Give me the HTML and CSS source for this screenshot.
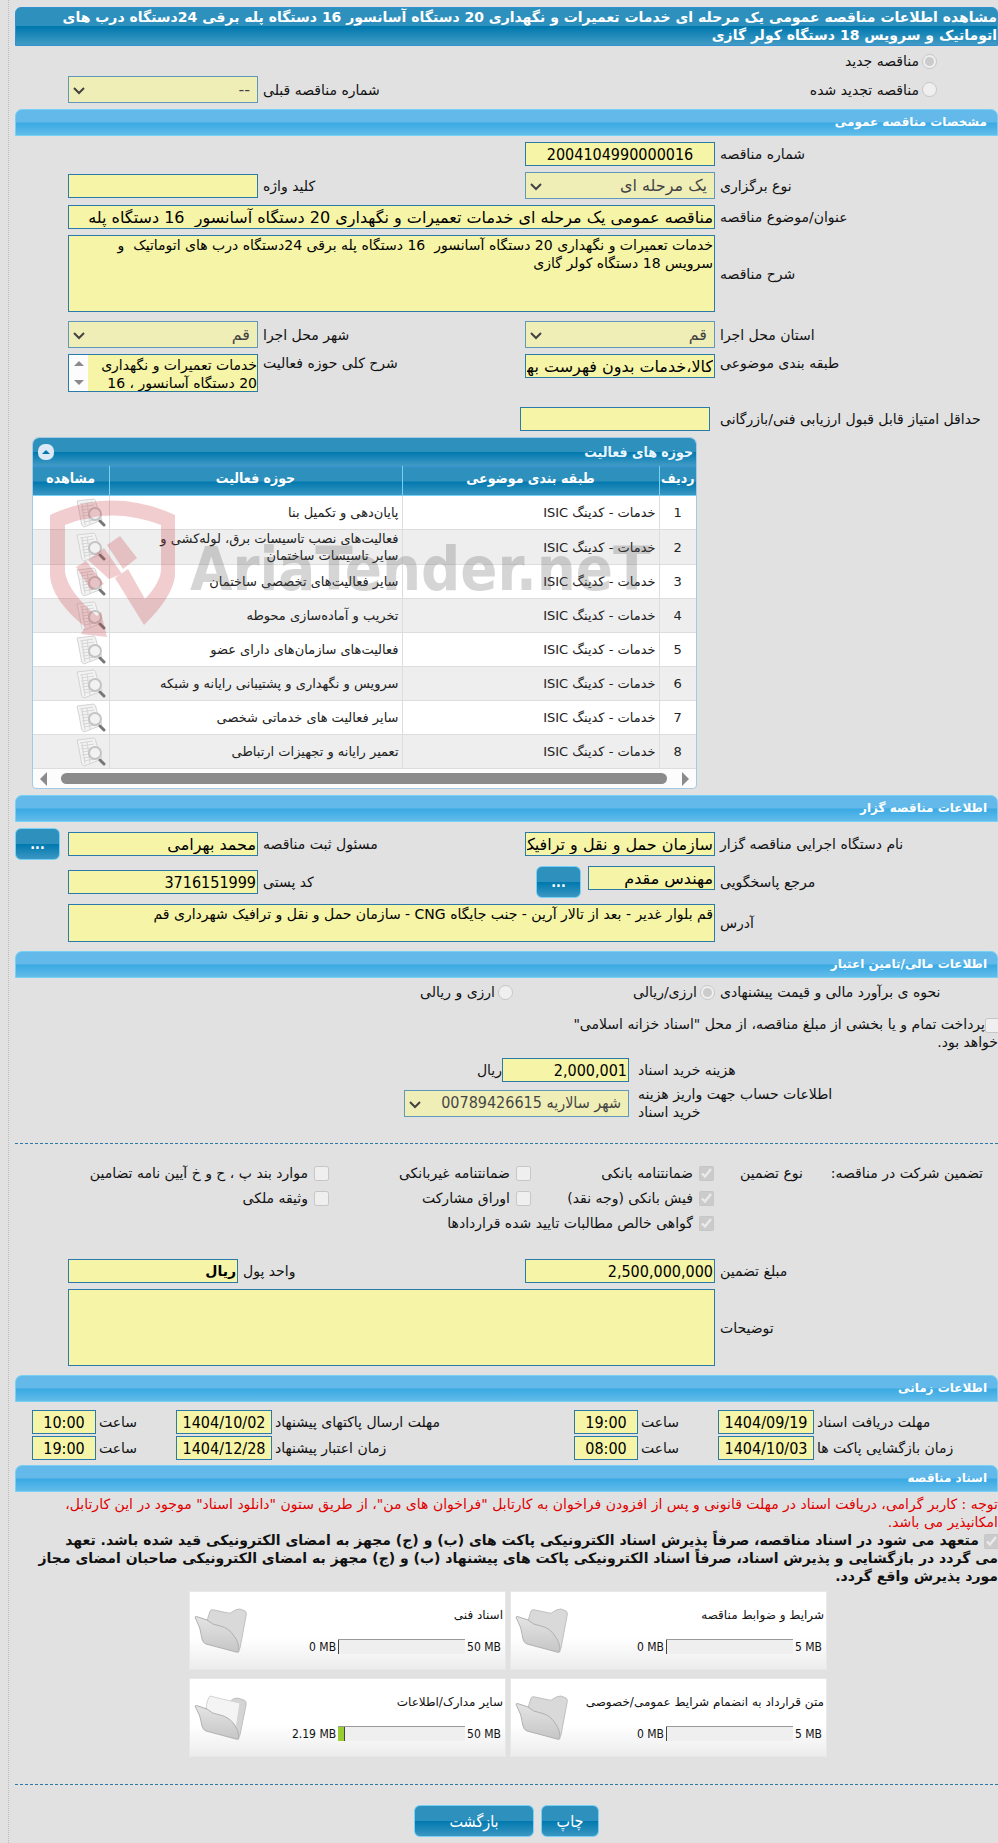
FILE: index.html
```html
<!DOCTYPE html>
<html lang="fa" dir="rtl">
<head>
    <meta charset="UTF-8">
    <title>مشاهده اطلاعات مناقصه عمومی</title>
    <link rel="stylesheet" href="styles.css">
</head>
<body>
    <!-- icons -->
    <svg class="defs" width="0" height="0">
        <defs>
            <linearGradient id="folder-fill" x1="0" y1="0" x2="0" y2="1">
                <stop offset="0" stop-color="#e4e4e4"/>
                <stop offset="1" stop-color="#c6c6c6"/>
            </linearGradient>
        </defs>
        <symbol id="folder" viewBox="0 0 54 46">
            <path d="M13 13 L16 3 Q17 1 20 2 L34 5 Q36 6 38 4 Q42 1 46 1 L51 3 Q53 4 52 8 L46 40 Q45 43 43 42 L12 35 Z" fill="#d9d9d9" stroke="#c0c0c0"/>
            <path d="M1 9 Q2 8 4 9 L13 12 Q18 17 26 18 Q35 20 40 28 Q45 34 45 43 Q45 45 42 44 L12 36 Q9 35 8 31 Q7 20 1 9 Z" fill="url(#folder-fill)" stroke="#b0b0b0"/>
        </symbol>
        <symbol id="folder-full" viewBox="0 0 54 46">
            <path d="M12 14 L15 5 L46 9 L43 38 L12 34 Z" fill="#e0e0e0" stroke="#ccc"/>
            <path d="M35 8 Q38 3 43 3 L50 5 Q53 6 52 10 L46 40 Q45 43 43 42 L34 38 Z" fill="#d4d4d4" stroke="#c0c0c0"/>
            <path d="M12 14 Q13 4 16 1 L28 4 L46 8 L42 34 Z" fill="#f4f4f4" stroke="#d4d4d4"/>
            <path d="M1 11 Q2 10 4 11 L13 14 Q18 19 26 20 Q35 22 40 29 Q45 35 45 43 Q45 45 42 44 L12 36 Q9 35 8 31 Q7 21 1 11 Z" fill="url(#folder-fill)" stroke="#b0b0b0"/>
        </symbol>
        <symbol id="view" viewBox="0 0 30 30">
            <path d="M1 3 L18 1 Q20 2 20 5 L22 12 L26 22 L8 29 Q5 28 5 23 L3 12 Z" fill="#f3f3f3" stroke="#d4d4d4"/>
            <path d="M4 6 L17 4 M5 9 L18 7 M5 12 L14 11 M6 15 L13 14 M6 18 L13 17 M7 21 L15 20 M8 24 L18 22 M6 6 L9 27 M11 5 L14 26" stroke="#d6d6d6" fill="none"/>
            <circle cx="19" cy="16" r="6" fill="#f2f2f2" stroke="#c4c4c4" stroke-width="2"/>
            <path d="M24 23 L28 27" stroke="#777" stroke-width="3" stroke-linecap="round"/>
        </symbol>
    </svg>

    <main class="page">
        <h1 class="title">مشاهده اطلاعات مناقصه عمومی یک مرحله ای خدمات تعمیرات و نگهداری 20 دستگاه آسانسور 16 دستگاه پله برقی 24دستگاه درب های<br>اتوماتیک و سرویس 18 دستگاه کولر گازی</h1>

        <div class="kind">
            <label class="check"><input type="radio" name="kind" checked disabled>مناقصه جدید</label>
            <div class="row kind-row">
                <label class="check"><input type="radio" name="kind" disabled>مناقصه تجدید شده</label>
                <label class="name" for="prev">شماره مناقصه قبلی</label>
                <select class="field select" id="prev" disabled><option>--</option></select>
            </div>
        </div>

        <h2 class="section">مشخصات مناقصه عمومی</h2>
        <div class="rows specs">
            <div class="row">
                <label class="name" for="number">شماره مناقصه</label>
                <input class="field num center" id="number" value="2004104990000016" readonly>
            </div>
            <div class="row">
                <label class="name" for="type">نوع برگزاری</label>
                <select class="field select" id="type" disabled><option>یک مرحله ای</option></select>
                <label class="name" for="keyword">کلید واژه</label>
                <input class="field" id="keyword" readonly>
            </div>
            <div class="row">
                <label class="name" for="subject">عنوان/موضوع مناقصه</label>
                <input class="field wide" id="subject" value="مناقصه عمومی یک مرحله ای خدمات تعمیرات و نگهداری 20 دستگاه آسانسور  16 دستگاه پله" readonly>
            </div>
            <div class="row">
                <label class="name" for="desc">شرح مناقصه</label>
                <textarea class="field area wide" id="desc" readonly>خدمات تعمیرات و نگهداری 20 دستگاه آسانسور  16 دستگاه پله برقی 24دستگاه درب های اتوماتیک  و
سرویس 18 دستگاه کولر گازی</textarea>
            </div>
            <div class="row place">
                <label class="name" for="province">استان محل اجرا</label>
                <select class="field select" id="province" disabled><option>قم</option></select>
                <label class="name" for="city">شهر محل اجرا</label>
                <select class="field select" id="city" disabled><option>قم</option></select>
            </div>
            <div class="row top">
                <label class="name" for="category">طبقه بندی موضوعی</label>
                <input class="field" id="category" value="کالا،خدمات بدون فهرست بها" readonly>
                <label class="name" for="scope">شرح کلی حوزه فعالیت</label>
                <div class="scroll-area field">
                    <textarea class="scroll-text" id="scope" readonly>خدمات تعمیرات و نگهداری
20 دستگاه آسانسور ، 16</textarea>
                    <span class="v-scroll"><i class="up"></i><i class="down"></i></span>
                </div>
            </div>
            <div class="row score">
                <label class="name" for="score">حداقل امتیاز قابل قبول ارزیابی فنی/بازرگانی</label>
                <input class="field" id="score" readonly>
            </div>
        </div>

        <div class="grid-panel">
            <div class="grid-title">
                <span>حوزه های فعالیت</span>
                <button class="collapse" type="button" aria-label="بستن"><i></i></button>
            </div>
            <table class="grid">
                <thead>
                    <tr><th class="c-num">ردیف</th><th class="c-cat">طبقه بندی موضوعی</th><th>حوزه فعالیت</th><th class="c-view">مشاهده</th></tr>
                </thead>
                <tbody>
                    <tr><td>1</td><td>خدمات - کدینگ ISIC</td><td>پایان‌دهی و تکمیل بنا</td><td><svg><use href="#view"/></svg></td></tr>
                    <tr><td>2</td><td>خدمات - کدینگ ISIC</td><td>فعالیت‌های نصب تاسیسات برق، لوله‌کشی و<br>سایر تاسیسات ساختمان</td><td><svg><use href="#view"/></svg></td></tr>
                    <tr><td>3</td><td>خدمات - کدینگ ISIC</td><td>سایر فعالیت‌های تخصصی ساختمان</td><td><svg><use href="#view"/></svg></td></tr>
                    <tr><td>4</td><td>خدمات - کدینگ ISIC</td><td>تخریب و آماده‌سازی محوطه</td><td><svg><use href="#view"/></svg></td></tr>
                    <tr><td>5</td><td>خدمات - کدینگ ISIC</td><td>فعالیت‌های سازمان‌های دارای عضو</td><td><svg><use href="#view"/></svg></td></tr>
                    <tr><td>6</td><td>خدمات - کدینگ ISIC</td><td>سرویس و نگهداری و پشتیبانی رایانه و شبکه</td><td><svg><use href="#view"/></svg></td></tr>
                    <tr><td>7</td><td>خدمات - کدینگ ISIC</td><td>سایر فعالیت های خدماتی شخصی</td><td><svg><use href="#view"/></svg></td></tr>
                    <tr><td>8</td><td>خدمات - کدینگ ISIC</td><td>تعمیر رایانه و تجهیزات ارتباطی</td><td><svg><use href="#view"/></svg></td></tr>
                </tbody>
            </table>
            <div class="h-scroll"><i class="next"></i><b></b><i class="prev"></i></div>
            <div class="watermark">
                <svg width="126" height="138" viewBox="0 0 126 138">
                    <g fill="#c8343c">
                        <path d="M0 15 Q62 -14 125 15 L125 76 Q122 98 94 125 L65 78 L78 69 L95 99 Q111 82 111 69 L111 25 Q62 6 15 25 L15 72 Q18 92 47 116 L51 112 L57 137 L31 134 L35 127 Q2 100 0 76 Z"/>
                        <path d="M57 45 L70 36 L87 58 L73 69 Z"/>
                        <path d="M38 60 L54 48 L72 74 L59 79 Z"/>
                        <path d="M26 67 L36 61 L54 84 L41 90 Z"/>
                    </g>
                </svg>
                <span>AriaTender.neT</span>
            </div>
        </div>

        <h2 class="section">اطلاعات مناقصه گزار</h2>
        <div class="rows">
            <div class="row with-button">
                <label class="name" for="org">نام دستگاه اجرایی مناقصه گزار</label>
                <input class="field" id="org" value="سازمان حمل و نقل و ترافیک شهرداری" readonly>
                <label class="name" for="registrar">مسئول ثبت مناقصه</label>
                <input class="field" id="registrar" value="محمد بهرامی" readonly>
                <button class="button more" type="button">...</button>
            </div>
            <div class="row">
                <label class="name" for="contact">مرجع پاسخگویی</label>
                <div class="contact">
                    <input class="field" id="contact" value="مهندس مقدم" readonly>
                    <button class="button more" type="button">...</button>
                </div>
                <label class="name" for="postal">کد پستی</label>
                <input class="field num" id="postal" value="3716151999" readonly>
            </div>
            <div class="row">
                <label class="name" for="address">آدرس</label>
                <textarea class="field area short wide" id="address" readonly>قم بلوار غدیر - بعد از تالار آرین - جنب جایگاه CNG - سازمان حمل و نقل و ترافیک شهرداری قم</textarea>
            </div>
        </div>

        <h2 class="section">اطلاعات مالی/تامین اعتبار</h2>
        <div class="finance">
            <div class="row">
                <span class="name">نحوه ی برآورد مالی و قیمت پیشنهادی</span>
                <div class="wide options">
                    <label class="check"><input type="radio" name="currency" checked disabled>ارزی/ریالی</label>
                    <label class="check"><input type="radio" name="currency" disabled>ارزی و ریالی</label>
                </div>
            </div>
            <label class="treasury"><input type="checkbox" disabled>پرداخت تمام و یا بخشی از مبلغ مناقصه، از محل "اسناد خزانه اسلامی"<br>خواهد بود.</label>
            <div class="cost">
                <label class="name" for="cost">هزینه خرید اسناد</label>
                <div class="cost-field"><input class="field num" id="cost" value="2,000,001" readonly>ریال</div>
                <label class="name" for="account">اطلاعات حساب جهت واریز هزینه<br>خرید اسناد</label>
                <select class="field select num account" id="account" disabled><option>شهر سالاریه 00789426615</option></select>
            </div>
        </div>

        <hr class="line">
        <div class="guarantee">
            <span>تضمین شرکت در مناقصه:</span>
            <span class="name">نوع تضمین</span>
            <div class="boxes">
                <label class="check"><input type="checkbox" checked disabled>ضمانتنامه بانکی</label>
                <label class="check"><input type="checkbox" disabled>ضمانتنامه غیربانکی</label>
                <label class="check"><input type="checkbox" disabled>موارد بند پ ، ح و خ آیین نامه تضامین</label>
                <label class="check"><input type="checkbox" checked disabled>فیش بانکی (وجه نقد)</label>
                <label class="check"><input type="checkbox" disabled>اوراق مشارکت</label>
                <label class="check"><input type="checkbox" disabled>وثیقه ملکی</label>
                <label class="check full"><input type="checkbox" checked disabled>گواهی خالص مطالبات تایید شده قراردادها</label>
            </div>
        </div>
        <div class="rows">
            <div class="row money">
                <label class="name" for="amount">مبلغ تضمین</label>
                <input class="field num" id="amount" value="2,500,000,000" readonly>
                <label class="name" for="unit">واحد پول</label>
                <input class="field strong" id="unit" value="ریال" readonly>
            </div>
            <div class="row">
                <label class="name" for="notes">توضیحات</label>
                <textarea class="field area wide" id="notes" readonly></textarea>
            </div>
        </div>

        <h2 class="section">اطلاعات زمانی</h2>
        <div class="times">
            <label class="name" for="d1">مهلت دریافت اسناد</label>
            <input class="field num center" id="d1" value="1404/09/19" readonly>
            <label class="name" for="t1">ساعت</label>
            <input class="field num center" id="t1" value="19:00" readonly>
            <label class="name" for="d2">مهلت ارسال پاکتهای پیشنهاد</label>
            <input class="field num center" id="d2" value="1404/10/02" readonly>
            <label class="name" for="t2">ساعت</label>
            <input class="field num center" id="t2" value="10:00" readonly>
            <label class="name" for="d3">زمان بازگشایی پاکت ها</label>
            <input class="field num center" id="d3" value="1404/10/03" readonly>
            <label class="name" for="t3">ساعت</label>
            <input class="field num center" id="t3" value="08:00" readonly>
            <label class="name" for="d4">زمان اعتبار پیشنهاد</label>
            <input class="field num center" id="d4" value="1404/12/28" readonly>
            <label class="name" for="t4">ساعت</label>
            <input class="field num center" id="t4" value="19:00" readonly>
        </div>

        <h2 class="section">اسناد مناقصه</h2>
        <p class="notice">توجه : کاربر گرامی، دریافت اسناد در مهلت قانونی و پس از افزودن فراخوان به کارتابل "فراخوان های من"، از طریق ستون "دانلود اسناد" موجود در این کارتابل،<br>امکانپذیر می باشد.</p>
        <label class="commit"><input type="checkbox" checked disabled>متعهد می شود در اسناد مناقصه، صرفاً پذیرش اسناد الکترونیکی پاکت های (ب) و (ج) مجهز به امضای الکترونیکی قید شده باشد. تعهد<br>می گردد در بازگشایی و پذیرش اسناد، صرفاً اسناد الکترونیکی پاکت های پیشنهاد (ب) و (ج) مجهز به امضای الکترونیکی صاحبان امضای مجاز<br>مورد پذیرش واقع گردد.</label>

        <div class="cards">
            <div class="card">
                <div class="card-body">
                    <p>شرایط و ضوابط مناقصه</p>
                    <div class="usage"><span dir="ltr">5 MB</span><div class="bar"><i style="width: 0%"></i></div><span dir="ltr">0 MB</span></div>
                </div>
                <svg class="folder"><use href="#folder"/></svg>
            </div>
            <div class="card">
                <div class="card-body">
                    <p>اسناد فنی</p>
                    <div class="usage"><span dir="ltr">50 MB</span><div class="bar"><i style="width: 0%"></i></div><span dir="ltr">0 MB</span></div>
                </div>
                <svg class="folder"><use href="#folder"/></svg>
            </div>
            <div class="card">
                <div class="card-body">
                    <p>متن قرارداد به انضمام شرایط عمومی/خصوصی</p>
                    <div class="usage"><span dir="ltr">5 MB</span><div class="bar"><i style="width: 0%"></i></div><span dir="ltr">0 MB</span></div>
                </div>
                <svg class="folder"><use href="#folder"/></svg>
            </div>
            <div class="card">
                <div class="card-body">
                    <p>سایر مدارک/اطلاعات</p>
                    <div class="usage"><span dir="ltr">50 MB</span><div class="bar"><i style="width: 5%"></i></div><span dir="ltr">2.19 MB</span></div>
                </div>
                <svg class="folder"><use href="#folder-full"/></svg>
            </div>
        </div>

        <hr class="line">
        <div class="actions">
            <button class="button print" type="button">چاپ</button>
            <button class="button back" type="button">بازگشت</button>
        </div>
    </main>
</body>
</html>
```
FILE: styles.css
```css
* {
    box-sizing: border-box;
}
body {
    margin: 0;
    background: #e1e1e1;
    color: #111;
    font-family: "DejaVu Sans", sans-serif;
    font-size: 14px;
    line-height: 18px;
    overflow-x: hidden;
}
.defs {
    position: absolute;
}
.page {
    margin-left: 8px;
    border-left: 1px dotted #bbb;
    padding: 7px 0 6px 6px;
}
p {
    margin: 0;
}

/* headings */
.title {
    margin: 0;
    padding-bottom: 1px;
    border: 1px solid #3190d0;
    border-radius: 6px 6px 0 0;
    background: linear-gradient(#2e90bd 50%, #0078ae 50%, #429bc5);
    color: #fff;
    font-size: 14px;
    line-height: 18px;
    white-space: nowrap;
}
.section {
    margin: 0;
    padding: 0 10px;
    height: 27px;
    border: 1px solid #78d0f5;
    border-radius: 7px 7px 0 0;
    background: linear-gradient(#63baea 48%, #3aa9e3 52%, #62bcea);
    color: #fff;
    font-size: 12px;
    line-height: 25px;
}

/* form rows */
.rows {
    display: flex;
    flex-direction: column;
    gap: 6px;
    padding: 6px 0 9px;
}
.rows.specs {
    padding-bottom: 6px;
}
.row {
    display: grid;
    grid-template-columns: 278px 190px 1fr 190px;
    column-gap: 5px;
    align-items: center;
    padding-left: 53px;
}
.row.top {
    align-items: start;
}
.name {
    text-align: left;
    white-space: nowrap;
}
.wide {
    grid-column: 2 / 5;
}
.field {
    width: 100%;
    height: 24px;
    margin: 0;
    padding: 0 1px;
    border: 1px solid #2a7aaa;
    border-radius: 0;
    background: #f6f4a6;
    color: #000;
    font-family: inherit;
    font-size: 16px;
    line-height: 20px;
    outline: none;
}
.num {
    font-family: "DejaVu Sans Condensed", "DejaVu Sans", sans-serif;
}
.center {
    text-align: center;
}
.strong {
    font-weight: bold;
    font-size: 14px;
}
.select {
    height: 27px;
    padding: 0 7px;
    appearance: none;
    background: #f6f4a6 url("data:image/svg+xml,%3Csvg xmlns='http://www.w3.org/2000/svg' width='12' height='8'%3E%3Cpath d='M1 1 L6 6 L11 1' fill='none' stroke='black' stroke-width='2'/%3E%3C/svg%3E") no-repeat 4px 10px;
    opacity: 0.7;
}
.area {
    display: block;
    height: 77px;
    font-size: 14px;
    line-height: 18px;
    resize: none;
    overflow: hidden;
}
.area.short {
    height: 38px;
}
.check {
    display: flex;
    align-items: center;
    gap: 6px;
    white-space: nowrap;
}
input[type="radio"],
input[type="checkbox"] {
    width: 15px;
    height: 15px;
    margin: 0;
    flex: none;
}

.kind {
    padding: 6px 0;
}
.kind .check {
    padding-right: 61px;
    gap: 3px;
    height: 18px;
}
.kind-row {
    grid-template-columns: 1fr auto 190px;
    margin-top: 6px;
}
.place {
    margin-top: 3px;
}
.score {
    margin-top: 9px;
}
.score .field {
    margin-right: 5px;
}

/* text area with its own scroll strip */
.scroll-area {
    display: flex;
    height: 38px;
    padding: 0;
}
.scroll-text {
    flex: 1;
    min-width: 0;
    padding: 1px 0;
    border: 0;
    background: none;
    font-family: inherit;
    font-size: 14px;
    line-height: 18px;
    resize: none;
    overflow: hidden;
    white-space: pre;
    outline: none;
}
.v-scroll {
    display: flex;
    flex-direction: column;
    justify-content: space-between;
    align-items: center;
    width: 19px;
    padding: 6px 0;
    background: #fcfcfc;
}
.up,
.down {
    border: 5px solid transparent;
}
.up {
    border-top: 0;
    border-bottom-color: #8b8b8b;
}
.down {
    border-bottom: 0;
    border-top-color: #8b8b8b;
}

/* activity table */
.grid-panel {
    position: relative;
    width: 665px;
    margin: 0 301px 6px 0;
    border: 1px solid #a3c9e4;
    border-radius: 7px 7px 4px 4px;
    background: #fcfcfc;
}
.grid-title {
    display: flex;
    justify-content: space-between;
    align-items: center;
    height: 28px;
    padding: 0 3px 0 5px;
    border-radius: 6px 6px 0 0;
    background: linear-gradient(#2e90bd 50%, #0078ae 50%, #429bc5);
    color: #eaf6ff;
    font-family: "DejaVu Sans Condensed", "DejaVu Sans", sans-serif;
    font-weight: bold;
}
.collapse {
    display: flex;
    align-items: center;
    justify-content: center;
    width: 16px;
    height: 16px;
    padding: 0;
    border: 0;
    border-radius: 7px;
    background: #dce8f6;
}
.collapse i {
    border: 4px solid transparent;
    border-top: 0;
    border-bottom-color: #0078ae;
}
.grid {
    width: 100%;
    table-layout: fixed;
    border-collapse: collapse;
}
.grid th {
    height: 29px;
    padding: 0 0 6px;
    border-left: 1px solid #78d0f5;
    border-top: 1px solid #3a92d2;
    border-bottom: 1px solid #78d0f5;
    background: linear-gradient(#2e90bd 50%, #0078ae 50%, #3b97c3);
    color: #fff;
    font-family: "DejaVu Sans Condensed", "DejaVu Sans", sans-serif;
    font-size: 14px;
}
.grid th:last-child,
.grid td:last-child {
    border-left: 0;
}
.c-num {
    width: 37px;
}
.c-cat {
    width: 257px;
}
.c-view {
    width: 76px;
}
.grid td {
    height: 34px;
    padding: 0 3px;
    border-left: 1px solid #ddd;
    border-bottom: 1px solid #ddd;
    background: #fff;
    color: #222;
    font-size: 13px;
    line-height: 17px;
}
.grid tr:nth-child(even) td {
    background: #eee;
}
.grid td:first-child {
    text-align: center;
}
.grid svg {
    display: block;
    width: 30px;
    height: 30px;
}
.h-scroll {
    display: flex;
    align-items: center;
    gap: 8px;
    height: 19px;
    padding: 0 7px;
}
.h-scroll b {
    flex: 1;
    height: 11px;
    margin: 0 7px 0 6px;
    border-radius: 6px;
    background: #8b8b8b;
}
.next,
.prev {
    border: 7px solid transparent;
}
.next {
    border-right: 0;
    border-left: 7px solid #8b8b8b;
}
.prev {
    border-left: 0;
    border-right: 7px solid #8b8b8b;
}
.watermark {
    position: absolute;
    top: 62px;
    left: 17px;
    display: flex;
    direction: ltr;
    align-items: center;
    gap: 14px;
    opacity: 0.24;
    pointer-events: none;
}
.watermark span {
    color: #555;
    font-family: "DejaVu Sans Condensed", "DejaVu Sans", sans-serif;
    font-size: 61px;
    font-weight: bold;
    line-height: 90px;
}

/* buttons */
.button {
    height: 32px;
    padding: 0;
    border: 1px solid #78d0f5;
    border-radius: 6px;
    background: linear-gradient(#2e90bd 50%, #0078ae 50%, #3b97c3);
    color: #fff;
    font-family: "DejaVu Sans Condensed", "DejaVu Sans", sans-serif;
    font-size: 16px;
}
.more {
    width: 45px;
    font-size: 14px;
    font-weight: bold;
}
.with-button {
    grid-template-columns: 278px 190px 1fr 190px 48px;
    padding-left: 0;
}
.with-button .more {
    justify-self: end;
}
.contact {
    display: flex;
    gap: 7px;
}
.contact .field {
    flex: none;
    width: 127px;
}

/* finance */
.finance {
    padding: 5px 0 22px;
}
.options {
    display: grid;
    grid-template-columns: 202px auto;
    justify-content: start;
}
.options .check {
    gap: 3px;
}
.treasury {
    display: block;
    padding-top: 14px;
    white-space: nowrap;
}
.treasury input {
    margin-right: -2px;
    vertical-align: middle;
}
.cost {
    display: grid;
    grid-template-columns: 360px 1fr;
    gap: 3px 9px;
    align-items: center;
    padding-top: 7px;
}
.cost-field {
    display: flex;
    align-items: center;
}
.cost-field .field {
    width: 127px;
}
.account {
    width: 225px;
}
.line {
    margin: 0;
    border: 0;
    border-top: 1px dashed #2a7aa5;
}
.guarantee {
    display: grid;
    grid-template-columns: 158px auto 1fr;
    gap: 20px;
    padding: 18px 15px 19px 53px;
}
.guarantee > span {
    line-height: 22px;
    white-space: nowrap;
}
.guarantee .name {
    width: 65px;
}
.boxes {
    display: grid;
    grid-template-columns: 183px 202px 1fr;
    row-gap: 3px;
    padding-right: 6px;
}
.boxes .check {
    height: 22px;
}
.full {
    grid-column: 1 / 4;
}
.money {
    grid-template-columns: 278px 190px 1fr 170px;
}

/* dates */
.times {
    display: grid;
    grid-template-columns: 181px 96px 74px 64px 1fr 96px 74px 64px;
    gap: 2px 3px;
    align-items: center;
    padding: 8px 0 5px 17px;
}

/* documents */
.notice {
    padding-top: 3px;
    color: #e00000;
    white-space: nowrap;
}
.commit {
    display: block;
    font-weight: bold;
    white-space: nowrap;
}
.commit input {
    margin: 0 -1px 0 5px;
    vertical-align: middle;
}
.cards {
    display: grid;
    grid-template-columns: 317px 317px;
    gap: 8px 4px;
    padding: 6px 171px 27px 0;
}
.card {
    display: flex;
    align-items: center;
    height: 79px;
    padding: 0 2px 0 4px;
    border: 1px solid #e8e8e8;
    background: linear-gradient(#fff 60%, #ececec);
    font-size: 12px;
}
.card-body {
    flex: 1;
}
.card-body p {
    white-space: nowrap;
}
.usage {
    display: flex;
    align-items: center;
    gap: 2px;
    margin-top: 14px;
    padding-right: 2px;
    font-family: "DejaVu Sans Condensed", "DejaVu Sans", sans-serif;
}
.bar {
    display: flex;
    direction: ltr;
    width: 127px;
    height: 15px;
    border-top: 1px solid #999;
    background: #efefef;
}
.bar i {
    box-sizing: content-box;
    border-right: 1px solid #444;
    background: #9acd32;
}
.folder {
    width: 54px;
    height: 46px;
    margin-right: -54px;
}
.actions {
    display: flex;
    gap: 7px;
    padding: 20px 399px 0 0;
}
.print {
    width: 58px;
}
.back {
    width: 120px;
}
```
